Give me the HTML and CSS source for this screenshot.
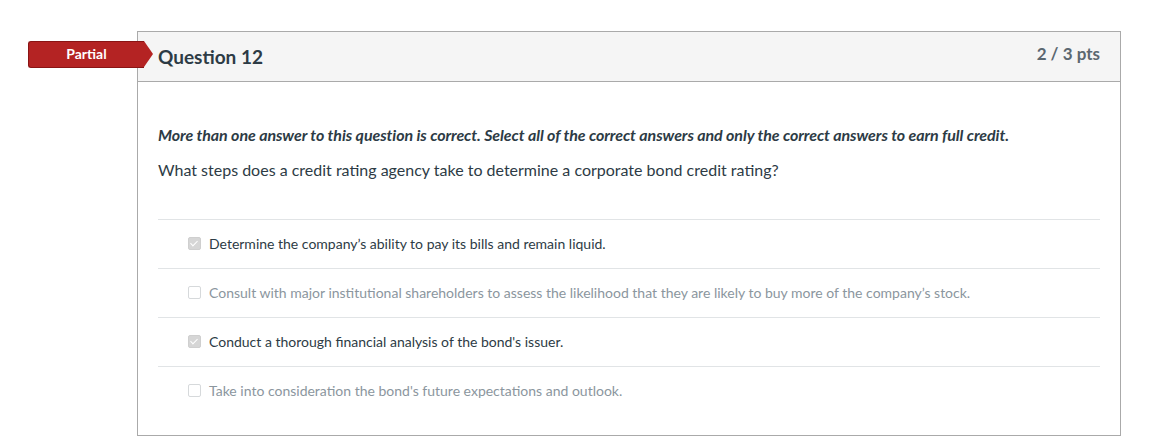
FILE: index.html
```html
<!DOCTYPE html>
<html lang="en">

<head>
    <meta charset="UTF-8" />
    <title>Question 12</title>
    <link rel="stylesheet" href="styles.css">
</head>

<body>
    <div class="quiz">
        <div class="question">
            <div class="flag-partial">Partial</div>
            <div class="header">
                <span class="name">Question 12</span>
                <span class="points">2 / 3 pts</span>
            </div>
            <div class="content">
                <p class="note">More than one answer to this question is correct. Select all of the correct answers and only the correct answers to earn full credit.</p>
                <p class="text">What steps does a credit rating agency take to determine a corporate bond credit rating?</p>

                <div class="answers">
                    <div class="answer selected">
                        <span class="box checked"></span>
                        <span>Determine the company’s ability to pay its bills and remain liquid.</span>
                    </div>
                    <div class="answer">
                        <span class="box"></span>
                        <span>Consult with major institutional shareholders to assess the likelihood that they are likely to buy more of the company’s stock.</span>
                    </div>
                    <div class="answer selected">
                        <span class="box checked"></span>
                        <span>Conduct a thorough financial analysis of the bond's issuer.</span>
                    </div>
                    <div class="answer">
                        <span class="box"></span>
                        <span>Take into consideration the bond's future expectations and outlook.</span>
                    </div>
                </div>
            </div>
        </div>
    </div>
</body>

</html>
```

FILE: styles.css
```css
body {
    font-family: Lato, "Open Sans", sans-serif;
    margin: 0;
    background: white;
    color: #2d3b45;
}

.quiz {
    padding: 31px 28px 0 137px;
}

.question {
    position: relative;
    border: 1px solid #aaaaaa;
}

.flag-partial {
    position: absolute;
    top: 9px;
    left: -110px;
    width: 115px;
    height: 25px;
    background: #b42323;
    border: 1px solid #8a1414;
    border-right: none;
    border-radius: 3px 0 0 3px;
    color: white;
    font-size: 14px;
    font-weight: bold;
    line-height: 24px;
    text-align: center;
    box-sizing: content-box;
}

.flag-partial::after {
    content: "";
    position: absolute;
    top: -1px;
    right: -9px;
    border-top: 13.5px solid transparent;
    border-bottom: 13.5px solid transparent;
    border-left: 9px solid #b42323;
}

.header {
    display: flex;
    justify-content: space-between;
    align-items: flex-start;
    height: 49px;
    padding: 0 20px;
    background: #f5f5f5;
    border-bottom: 1px solid #aaaaaa;
}

.name {
    font-size: 19px;
    font-weight: bold;
    margin-top: 13px;
}

.points {
    font-size: 17px;
    font-weight: bold;
    color: #5b6770;
    margin-top: 11px;
}

.content {
    padding: 20px;
}

.note {
    margin: 23px 0 0;
    font-size: 16px;
    line-height: 20px;
    font-weight: bold;
    font-style: italic;
    letter-spacing: -0.08px;
}

.text {
    margin: 15px 0 39px;
    font-size: 16px;
    line-height: 20px;
}

.answer {
    display: flex;
    align-items: center;
    height: 47px;
    padding-bottom: 1px;
    border-top: 1px solid #e1e4e6;
    padding-left: 30px;
    font-size: 14px;
    color: #8b969e;
}

.answer.selected {
    color: #2d3b45;
}

.box {
    width: 11px;
    height: 11px;
    margin-right: 8px;
    border: 1px solid #d6d9db;
    border-radius: 2px;
    background: white;
    position: relative;
}

.box.checked {
    background: #d6d6d6;
    border-color: #cfcfcf;
}

.box.checked::after {
    content: "";
    position: absolute;
    left: 3px;
    top: 1px;
    width: 3px;
    height: 6px;
    border: solid white;
    border-width: 0 1.5px 1.5px 0;
    transform: rotate(45deg);
}
```
